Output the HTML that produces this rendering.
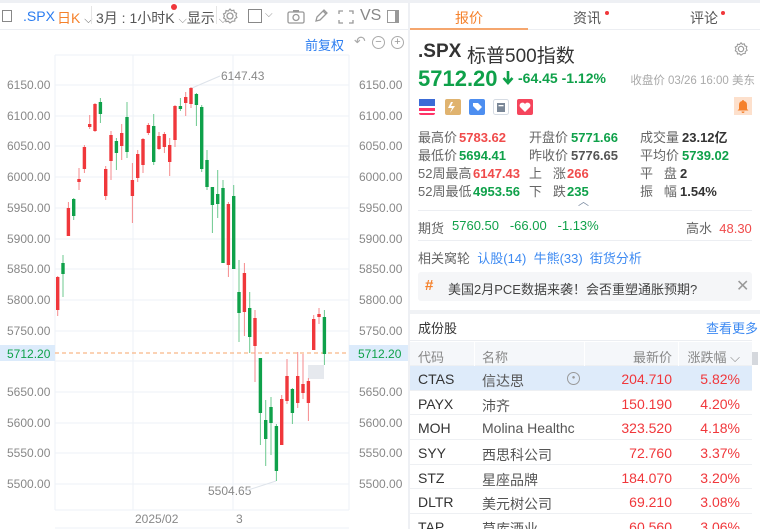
<!DOCTYPE html>
<html style="width:760px;height:529px;overflow:hidden"><head><meta charset="utf-8">
<style>
*{margin:0;padding:0;box-sizing:border-box}
body{width:760px;height:529px;overflow:hidden;background:#fff;font-family:"Liberation Sans","Noto Sans CJK SC",sans-serif;position:relative;color:#333}
.a{position:absolute;white-space:nowrap}
.gr{color:#0fa14a}.rd{color:#f0373b}.gy{color:#888}
.lb{color:#666}
.r line{stroke:#f58a8c}.r rect{fill:#f0373b}
.g line{stroke:#6cc98f}.g rect{fill:#0fa14a}
.stat{font-size:13px;position:absolute;white-space:nowrap}
.tbl{position:absolute;left:410px;top:342px;width:342px;font-size:14px}
.row{height:24.7px;position:relative;border-bottom:1px solid #eef0f3}
.row span{position:absolute;top:5px}
</style></head><body>
<div class="a" style="left:0;top:0;width:760px;height:3px;background:#eef0f4"></div>
<!-- toolbar -->
<div class="a" style="left:0;top:3px;width:408px;height:27px;border-bottom:1px solid #eceef2"></div>
<div class="a" style="left:2px;top:10px;width:10px;height:12px;border:1.5px solid #888"></div>
<div class="a" style="left:23px;top:8px;font-size:14px;color:#2a7cf0">.SPX</div>
<div class="a" style="left:57px;top:8px;font-size:14px;color:#f5812b">日K <span style="color:#666;font-size:11px">⌵</span></div>
<div class="a" style="left:91px;top:6px;width:1px;height:18px;background:#e5e5e5"></div>
<div class="a" style="left:96px;top:8px;font-size:14px;color:#555">3月 : 1小时K <span style="font-size:11px;color:#888">⌵</span>显示 <span style="font-size:11px;color:#888">⌵</span></div>
<div class="a" style="left:171px;top:4px;width:6px;height:6px;border-radius:50%;background:#f0373b"></div>
<div class="a" style="left:216px;top:6px;width:1px;height:18px;background:#e5e5e5"></div>
<svg class="a" style="left:221px;top:7px" width="18" height="18" viewBox="0 0 18 18"><circle cx="9" cy="9" r="3" fill="none" stroke="#999" stroke-width="1.3"/><path d="M9 2l1.5 1.7 2.3-.5.6 2.2 2.2.9-.7 2.2 1 2-2 1.3-.2 2.3-2.3.1L9 16l-1.7-1.7-2.3.3-.4-2.3L2.6 11l.8-2-.9-2.1 2.1-1 .5-2.3 2.2.4z" fill="none" stroke="#999" stroke-width="1.2"/></svg>
<div class="a" style="left:248px;top:9px;width:14px;height:14px;border:1.5px solid #888"></div>
<div class="a" style="left:265px;top:9px;font-size:10px;color:#888">⌵</div>
<svg class="a" style="left:287px;top:9px" width="18" height="15" viewBox="0 0 18 15"><rect x="1" y="3" width="16" height="11" rx="1.5" fill="none" stroke="#999" stroke-width="1.3"/><rect x="6" y="1" width="6" height="2" fill="#999"/><circle cx="9" cy="8.5" r="3" fill="none" stroke="#999" stroke-width="1.3"/></svg>
<svg class="a" style="left:313px;top:8px" width="16" height="16" viewBox="0 0 16 16"><path d="M3 13l1-4 7-7 3 3-7 7z M10 3l3 3" fill="none" stroke="#999" stroke-width="1.3"/></svg>
<svg class="a" style="left:338px;top:10px" width="16" height="14" viewBox="0 0 16 14"><path d="M1 4V1h4M11 1h4v3M15 10v3h-4M5 13H1v-3" fill="none" stroke="#999" stroke-width="1.3"/></svg>
<div class="a" style="left:360px;top:7px;font-size:16px;color:#888">VS</div>
<div class="a" style="left:387px;top:10px;width:12px;height:13px;border:1.5px solid #999;border-right:4px solid #999"></div>
<div class="a" style="left:305px;top:35px;font-size:13px;color:#2a7cf0">前复权</div>
<div class="a" style="left:354px;top:33px;font-size:14px;color:#aaa">↶</div>
<div class="a" style="left:372px;top:36px;width:13px;height:13px;border:1.2px solid #aaa;border-radius:50%;font-size:11px;line-height:10px;text-align:center;color:#999">−</div>
<div class="a" style="left:391px;top:36px;width:13px;height:13px;border:1.2px solid #aaa;border-radius:50%;font-size:11px;line-height:10px;text-align:center;color:#999">+</div>

<!-- chart -->
<svg class="a" style="left:0;top:0" width="408" height="529">
<g stroke="#eef2f7" stroke-width="1">
<line x1="55" y1="55" x2="55" y2="510"/><line x1="133" y1="55" x2="133" y2="510"/><line x1="233" y1="55" x2="233" y2="510"/><line x1="349" y1="55" x2="349" y2="510"/>
<line x1="55" y1="55" x2="349" y2="55"/>
<line x1="55" y1="85" x2="349" y2="85"/><line x1="55" y1="116" x2="349" y2="116"/><line x1="55" y1="146" x2="349" y2="146"/><line x1="55" y1="177" x2="349" y2="177"/><line x1="55" y1="208" x2="349" y2="208"/><line x1="55" y1="239" x2="349" y2="239"/><line x1="55" y1="269" x2="349" y2="269"/><line x1="55" y1="300" x2="349" y2="300"/><line x1="55" y1="331" x2="349" y2="331"/><line x1="55" y1="361" x2="349" y2="361"/><line x1="55" y1="392" x2="349" y2="392"/><line x1="55" y1="423" x2="349" y2="423"/><line x1="55" y1="453" x2="349" y2="453"/><line x1="55" y1="484" x2="349" y2="484"/>
<line x1="55" y1="510" x2="349" y2="510"/>
<line x1="55" y1="528" x2="349" y2="528"/>
</g>
<g font-size="12" fill="#888" font-family="Liberation Sans">
<text x="7" y="89">6150.00</text><text x="7" y="120">6100.00</text><text x="7" y="150">6050.00</text><text x="7" y="181">6000.00</text><text x="7" y="212">5950.00</text><text x="7" y="243">5900.00</text><text x="7" y="273">5850.00</text><text x="7" y="304">5800.00</text><text x="7" y="335">5750.00</text><text x="7" y="396">5650.00</text><text x="7" y="427">5600.00</text><text x="7" y="457">5550.00</text><text x="7" y="488">5500.00</text>
<text x="359" y="89">6150.00</text><text x="359" y="120">6100.00</text><text x="359" y="150">6050.00</text><text x="359" y="181">6000.00</text><text x="359" y="212">5950.00</text><text x="359" y="243">5900.00</text><text x="359" y="273">5850.00</text><text x="359" y="304">5800.00</text><text x="359" y="335">5750.00</text><text x="359" y="396">5650.00</text><text x="359" y="427">5600.00</text><text x="359" y="457">5550.00</text><text x="359" y="488">5500.00</text>
<text x="135" y="523">2025/02</text><text x="236" y="523">3</text>
<text x="221" y="80">6147.43</text><text x="208" y="495">5504.65</text>
</g>
<line x1="192" y1="88" x2="220" y2="76" stroke="#dde3ea"/>
<line x1="245" y1="491" x2="276" y2="481" stroke="#dde3ea"/>
<rect x="0" y="345" width="55" height="16" fill="#dcebfb"/><rect x="349" y="345" width="59" height="16" fill="#dcebfb"/>
<text x="7" y="358" font-size="12" fill="#0fa14a">5712.20</text><text x="358" y="358" font-size="12" fill="#0fa14a">5712.20</text>
<line x1="55" y1="353" x2="349" y2="353" stroke="#f7a66a" stroke-dasharray="4,3"/>
<rect x="308" y="365" width="16" height="14" fill="#e6e9ee"/>
<g stroke-width="1">
<g class="r"><line x1="57.7" y1="276" x2="57.7" y2="316"/><rect x="56" y="277" width="3.4" height="33"/></g>
<g class="g"><line x1="63" y1="255" x2="63" y2="297"/><rect x="61.3" y="263" width="3.4" height="11"/></g>
<g class="r"><line x1="68.4" y1="202" x2="68.4" y2="236"/><rect x="66.7" y="208" width="3.4" height="28"/></g>
<g class="g"><line x1="73.7" y1="198" x2="73.7" y2="220"/><rect x="72" y="199" width="3.4" height="17"/></g>
<g class="r"><line x1="79" y1="168" x2="79" y2="190"/><rect x="77.3" y="179" width="3.4" height="3"/></g>
<g class="r"><line x1="84.4" y1="145" x2="84.4" y2="173"/><rect x="82.7" y="147" width="3.4" height="22"/></g>
<g class="r"><line x1="89.7" y1="115" x2="89.7" y2="129"/><rect x="88" y="124" width="3.4" height="3"/></g>
<g class="r"><line x1="95" y1="103" x2="95" y2="132"/><rect x="93.3" y="104" width="3.4" height="27"/></g>
<g class="g"><line x1="100.4" y1="98" x2="100.4" y2="123"/><rect x="98.7" y="102" width="3.4" height="12"/></g>
<g class="r"><line x1="105.7" y1="166" x2="105.7" y2="200"/><rect x="104" y="169" width="3.4" height="27"/></g>
<g class="r"><line x1="111" y1="131" x2="111" y2="180"/><rect x="109.3" y="135" width="3.4" height="26"/></g>
<g class="g"><line x1="116.4" y1="138" x2="116.4" y2="170"/><rect x="114.7" y="141" width="3.4" height="12"/></g>
<g class="r"><line x1="121.7" y1="124" x2="121.7" y2="160"/><rect x="120" y="133" width="3.4" height="13"/></g>
<g class="g"><line x1="127" y1="102" x2="127" y2="158"/><rect x="125.3" y="117" width="3.4" height="35"/></g>
<g class="r"><line x1="132.4" y1="163" x2="132.4" y2="223"/><rect x="130.7" y="180" width="3.4" height="16"/></g>
<g class="r"><line x1="137.7" y1="150" x2="137.7" y2="182"/><rect x="136" y="154" width="3.4" height="24"/></g>
<g class="r"><line x1="143" y1="138" x2="143" y2="173"/><rect x="141.3" y="139" width="3.4" height="26"/></g>
<g class="r"><line x1="148.4" y1="123" x2="148.4" y2="135"/><rect x="146.7" y="125" width="3.4" height="8"/></g>
<g class="g"><line x1="153.7" y1="114" x2="153.7" y2="165"/><rect x="152" y="126" width="3.4" height="36"/></g>
<g class="r"><line x1="159" y1="132" x2="159" y2="150"/><rect x="157.3" y="136" width="3.4" height="13"/></g>
<g class="r"><line x1="164.4" y1="132" x2="164.4" y2="153"/><rect x="162.7" y="134" width="3.4" height="13"/></g>
<g class="r"><line x1="169.7" y1="138" x2="169.7" y2="176"/><rect x="168" y="145" width="3.4" height="17"/></g>
<g class="r"><line x1="175" y1="105" x2="175" y2="147"/><rect x="173.3" y="106" width="3.4" height="34"/></g>
<g class="g"><line x1="180.4" y1="98" x2="180.4" y2="111"/><rect x="178.7" y="106" width="3.4" height="3"/></g>
<g class="r"><line x1="185.7" y1="92" x2="185.7" y2="116"/><rect x="184" y="97" width="3.4" height="6"/></g>
<g class="r"><line x1="191" y1="87" x2="191" y2="108"/><rect x="189.3" y="88" width="3.4" height="16"/></g>
<g class="g"><line x1="196.4" y1="93" x2="196.4" y2="126"/><rect x="194.7" y="94" width="3.4" height="11"/></g>
<g class="g"><line x1="201.7" y1="105" x2="201.7" y2="172"/><rect x="200" y="107" width="3.4" height="62"/></g>
<g class="g"><line x1="207" y1="150" x2="207" y2="190"/><rect x="205.3" y="160" width="3.4" height="27"/></g>
<g class="g"><line x1="212.4" y1="187" x2="212.4" y2="233"/><rect x="210.7" y="187" width="3.4" height="18"/></g>
<g class="g"><line x1="217.7" y1="170" x2="217.7" y2="218"/><rect x="216" y="194" width="3.4" height="10"/></g>
<g class="g"><line x1="223" y1="180" x2="223" y2="263"/><rect x="221.3" y="188" width="3.4" height="75"/></g>
<g class="r"><line x1="228.4" y1="202" x2="228.4" y2="277"/><rect x="226.7" y="204" width="3.4" height="61"/></g>
<g class="g"><line x1="233.7" y1="185" x2="233.7" y2="269"/><rect x="232" y="196" width="3.4" height="73"/></g>
<g class="g"><line x1="239" y1="260" x2="239" y2="342"/><rect x="237.3" y="292" width="3.4" height="21"/></g>
<g class="r"><line x1="244.4" y1="263" x2="244.4" y2="336"/><rect x="242.7" y="273" width="3.4" height="39"/></g>
<g class="g"><line x1="249.7" y1="292" x2="249.7" y2="353"/><rect x="248" y="308" width="3.4" height="29"/></g>
<g class="r"><line x1="255" y1="310" x2="255" y2="382"/><rect x="253.3" y="318" width="3.4" height="28"/></g>
<g class="g"><line x1="260.4" y1="358" x2="260.4" y2="445"/><rect x="258.7" y="358" width="3.4" height="55"/></g>
<g class="g"><line x1="265.7" y1="400" x2="265.7" y2="466"/><rect x="264" y="420" width="3.4" height="19"/></g>
<g class="g"><line x1="271" y1="397" x2="271" y2="455"/><rect x="269.3" y="407" width="3.4" height="16"/></g>
<g class="g"><line x1="276.4" y1="424" x2="276.4" y2="481"/><rect x="274.7" y="426" width="3.4" height="45"/></g>
<g class="r"><line x1="281.7" y1="395" x2="281.7" y2="445"/><rect x="280" y="399" width="3.4" height="46"/></g>
<g class="r"><line x1="287" y1="359" x2="287" y2="404"/><rect x="285.3" y="376" width="3.4" height="25"/></g>
<g class="g"><line x1="292.4" y1="388" x2="292.4" y2="424"/><rect x="290.7" y="389" width="3.4" height="24"/></g>
<g class="r"><line x1="297.7" y1="352" x2="297.7" y2="408"/><rect x="296" y="376" width="3.4" height="27"/></g>
<g class="r"><line x1="303" y1="354" x2="303" y2="399"/><rect x="301.3" y="384" width="3.4" height="9"/></g>
<g class="r"><line x1="308.4" y1="378" x2="308.4" y2="421"/><rect x="306.7" y="381" width="3.4" height="22"/></g>
<g class="r"><line x1="313.7" y1="315" x2="313.7" y2="350"/><rect x="312" y="319" width="3.4" height="31"/></g>
<g class="r"><line x1="319" y1="308" x2="319" y2="324"/><rect x="317.3" y="314" width="3.4" height="3"/></g>
<g class="g"><line x1="324.4" y1="310" x2="324.4" y2="365"/><rect x="322.7" y="317" width="3.4" height="37"/></g>
</g>
</svg>
<div class="a" style="left:408px;top:0;width:2px;height:529px;background:#eef0f4"></div>

<!-- right panel -->
<div class="a" style="left:410px;top:3px;width:350px;height:27px;border-bottom:1px solid #eceef2"></div>
<div class="a" style="left:455px;top:8px;font-size:14px;color:#f5812b">报价</div>
<div class="a" style="left:410px;top:28px;width:118px;height:2px;background:#f5a66e"></div>
<div class="a" style="left:573px;top:8px;font-size:14px;color:#555">资讯</div>
<div class="a" style="left:605px;top:11px;width:4px;height:4px;border-radius:50%;background:#f0373b"></div>
<div class="a" style="left:690px;top:8px;font-size:14px;color:#555">评论</div>
<div class="a" style="left:721px;top:11px;width:4px;height:4px;border-radius:50%;background:#f0373b"></div>

<div class="a" style="left:418px;top:41px;font-size:19px;font-weight:bold;color:#333">.SPX</div>
<div class="a" style="left:467px;top:41px;font-size:19px;color:#333">标普500指数</div>
<svg class="a" style="left:733px;top:41px" width="16" height="16" viewBox="0 0 18 18"><circle cx="9" cy="9" r="3" fill="none" stroke="#999" stroke-width="1.3"/><path d="M9 2l1.5 1.7 2.3-.5.6 2.2 2.2.9-.7 2.2 1 2-2 1.3-.2 2.3-2.3.1L9 16l-1.7-1.7-2.3.3-.4-2.3L2.6 11l.8-2-.9-2.1 2.1-1 .5-2.3 2.2.4z" fill="none" stroke="#999" stroke-width="1.2"/></svg>
<div class="a gr" style="left:418px;top:66px;font-size:22px;font-weight:bold">5712.20</div>
<svg class="a" style="left:502px;top:70px" width="12" height="16" viewBox="0 0 12 16"><path d="M6 1v11M1.5 8l4.5 5 4.5-5" fill="none" stroke="#0fa14a" stroke-width="2.6"/></svg>
<div class="a gr" style="left:518px;top:70px;font-size:14px;font-weight:bold">-64.45 -1.12%</div>
<div class="a" style="right:5px;top:72px;font-size:11.5px;color:#aaa">收盘价 03/26 16:00 美东</div>

<svg class="a" style="left:418px;top:99px" width="120" height="17">
<rect x="1" y="0" width="16" height="16" rx="2" fill="#f36"/><rect x="1" y="2" width="16" height="2" fill="#fff"/><rect x="1" y="7" width="16" height="2" fill="#fff"/><rect x="1" y="12" width="16" height="2" fill="#fff"/><rect x="1" y="0" width="16" height="7" fill="#3b6bd6"/>
<rect x="27" y="0" width="16" height="16" rx="2" fill="#e0b36f"/><path d="M33 3l-3 6h4l-2 5 5-7h-4l2-4z" fill="#fff"/>
<rect x="51" y="0" width="16" height="16" rx="2" fill="#4d8ef0"/><path d="M55 4h5l4 4-4 4-5-5z" fill="#fff"/>
<rect x="75.5" y="0.5" width="15" height="15" rx="2" fill="#fff" stroke="#d5dbe3"/><rect x="79" y="4" width="8" height="9" fill="#7a8797"/><rect x="80.5" y="6" width="5" height="1.3" fill="#fff"/>
<rect x="99" y="0" width="16" height="16" rx="2" fill="#f5455c"/><path d="M107 13l-5-5a2.5 2.5 0 0 1 5-3 2.5 2.5 0 0 1 5 3z" fill="#fff"/>
</svg>
<div class="a" style="left:734px;top:97px;width:18px;height:18px;background:#fde0cc"></div>
<svg class="a" style="left:736px;top:99px" width="14" height="14" viewBox="0 0 14 14"><path d="M7 1a1 1 0 0 1 1 1 4 4 0 0 1 3 4v4l1.5 1.5h-11L3 10V6a4 4 0 0 1 3-4 1 1 0 0 1 1-1zM5.5 12.5h3a1.5 1.5 0 0 1-3 0z" fill="#f5812b"/></svg>

<div class="stat" style="left:418px;top:129px;line-height:18px">
<span class="lb">最高价</span><br><span class="lb">最低价</span><br><span class="lb">52周最高</span><br><span class="lb">52周最低</span></div>
<div class="stat" style="left:459px;top:129px;line-height:18px;font-weight:bold"><span style="color:#f04b4b">5783.62</span><br><span class="gr">5694.41</span></div>
<div class="stat" style="left:473px;top:165px;line-height:18px;font-weight:bold"><span style="color:#f04b4b">6147.43</span><br><span class="gr">4953.56</span></div>
<div class="stat" style="left:529px;top:129px;line-height:18px"><span class="lb">开盘价</span><br><span class="lb">昨收价</span><br><span class="lb">上&nbsp;&nbsp;&nbsp;涨</span><br><span class="lb">下&nbsp;&nbsp;&nbsp;跌</span></div>
<div class="stat" style="left:571px;top:129px;line-height:18px;font-weight:bold"><span class="gr">5771.66</span><br><span style="color:#555">5776.65</span></div>
<div class="stat" style="left:567px;top:165px;line-height:18px;font-weight:bold"><span style="color:#f04b4b">266</span><br><span class="gr">235</span></div>
<div class="stat" style="left:640px;top:129px;line-height:18px"><span class="lb">成交量</span><br><span class="lb">平均价</span><br><span class="lb">平&nbsp;&nbsp;&nbsp;盘</span><br><span class="lb">振&nbsp;&nbsp;&nbsp;幅</span></div>
<div class="stat" style="left:682px;top:129px;line-height:18px;font-weight:bold"><span style="color:#333">23.12亿</span><br><span class="gr">5739.02</span></div>
<div class="stat" style="left:680px;top:165px;line-height:18px;font-weight:bold"><span style="color:#333">2</span><br><span style="color:#333">1.54%</span></div>
<div class="a" style="left:578px;top:193px;font-size:11px;color:#7a8aa0">︿</div>
<div class="a" style="left:418px;top:210px;width:334px;height:1px;background:#eceef2"></div>
<div class="stat" style="left:418px;top:218px"><span class="lb">期货</span></div>
<div class="stat gr" style="left:452px;top:218px">5760.50&nbsp;&nbsp;&nbsp;-66.00&nbsp;&nbsp;&nbsp;-1.13%</div>
<div class="stat" style="left:686px;top:218px"><span class="lb">高水</span> <span style="color:#f04b4b">&nbsp;48.30</span></div>
<div class="a" style="left:418px;top:240px;width:334px;height:1px;background:#eceef2"></div>
<div class="stat" style="left:418px;top:248px"><span class="lb">相关窝轮</span> <span style="color:#3d8af2">&nbsp;认股(14)&nbsp;&nbsp;牛熊(33)&nbsp;&nbsp;街货分析</span></div>
<div class="a" style="left:418px;top:272px;width:334px;height:29px;background:#f5f6f8;border-radius:3px"></div>
<div class="a" style="left:425px;top:277px;font-size:15px;color:#f5812b;font-weight:bold">#</div>
<div class="stat" style="left:448px;top:279px;color:#444">美国2月PCE数据来袭！会否重塑通胀预期?</div>
<div class="a" style="left:736px;top:276px;font-size:16px;color:#999">✕</div>
<div class="a" style="left:410px;top:310px;width:350px;height:4px;background:#f0f2f5"></div>
<div class="stat" style="left:418px;top:318px;color:#333">成份股</div>
<div class="stat" style="left:706px;top:318px;color:#3d8af2">查看更多</div>
<div class="a" style="left:410px;top:340px;width:342px;height:1px;background:#eceef2"></div>
<div class="a" style="left:752px;top:352px;width:6px;height:13px;background:#d5d8dd"></div>

<div class="tbl">
<div class="row" style="background:#f5f7fa;height:24px;color:#888;font-size:13px">
<span style="left:8px">代码</span><span style="left:72px">名称</span><span style="right:80px">最新价</span><span style="right:12px">涨跌幅 ⌵</span>
<div class="a" style="left:64px;top:0;width:1px;height:24px;background:#fff"></div><div class="a" style="left:174px;top:0;width:1px;height:24px;background:#fff"></div><div class="a" style="left:268px;top:0;width:1px;height:24px;background:#fff"></div></div>
<div class="row" style="background:#deebfa"><span style="left:8px">CTAS</span><span style="left:72px;color:#555">信达思</span><span style="left:157px;top:6px;width:13px;height:13px;border:1px solid #999;border-radius:50%;font-size:6px;line-height:11px;text-align:center;color:#999">●</span><span class="rd" style="right:80px">204.710</span><span class="rd" style="right:12px">5.82%</span></div>
<div class="row"><span style="left:8px">PAYX</span><span style="left:72px;color:#555">沛齐</span><span class="rd" style="right:80px">150.190</span><span class="rd" style="right:12px">4.20%</span></div>
<div class="row"><span style="left:8px">MOH</span><span style="left:72px;color:#555;width:96px;overflow:hidden">Molina Healthc</span><span class="rd" style="right:80px">323.520</span><span class="rd" style="right:12px">4.18%</span></div>
<div class="row"><span style="left:8px">SYY</span><span style="left:72px;color:#555">西思科公司</span><span class="rd" style="right:80px">72.760</span><span class="rd" style="right:12px">3.37%</span></div>
<div class="row"><span style="left:8px">STZ</span><span style="left:72px;color:#555">星座品牌</span><span class="rd" style="right:80px">184.070</span><span class="rd" style="right:12px">3.20%</span></div>
<div class="row"><span style="left:8px">DLTR</span><span style="left:72px;color:#555">美元树公司</span><span class="rd" style="right:80px">69.210</span><span class="rd" style="right:12px">3.08%</span></div>
<div class="row"><span style="left:8px">TAP</span><span style="left:72px;color:#555">莫库酒业</span><span class="rd" style="right:80px">60.560</span><span class="rd" style="right:12px">3.06%</span></div>
</div>
</body></html>
